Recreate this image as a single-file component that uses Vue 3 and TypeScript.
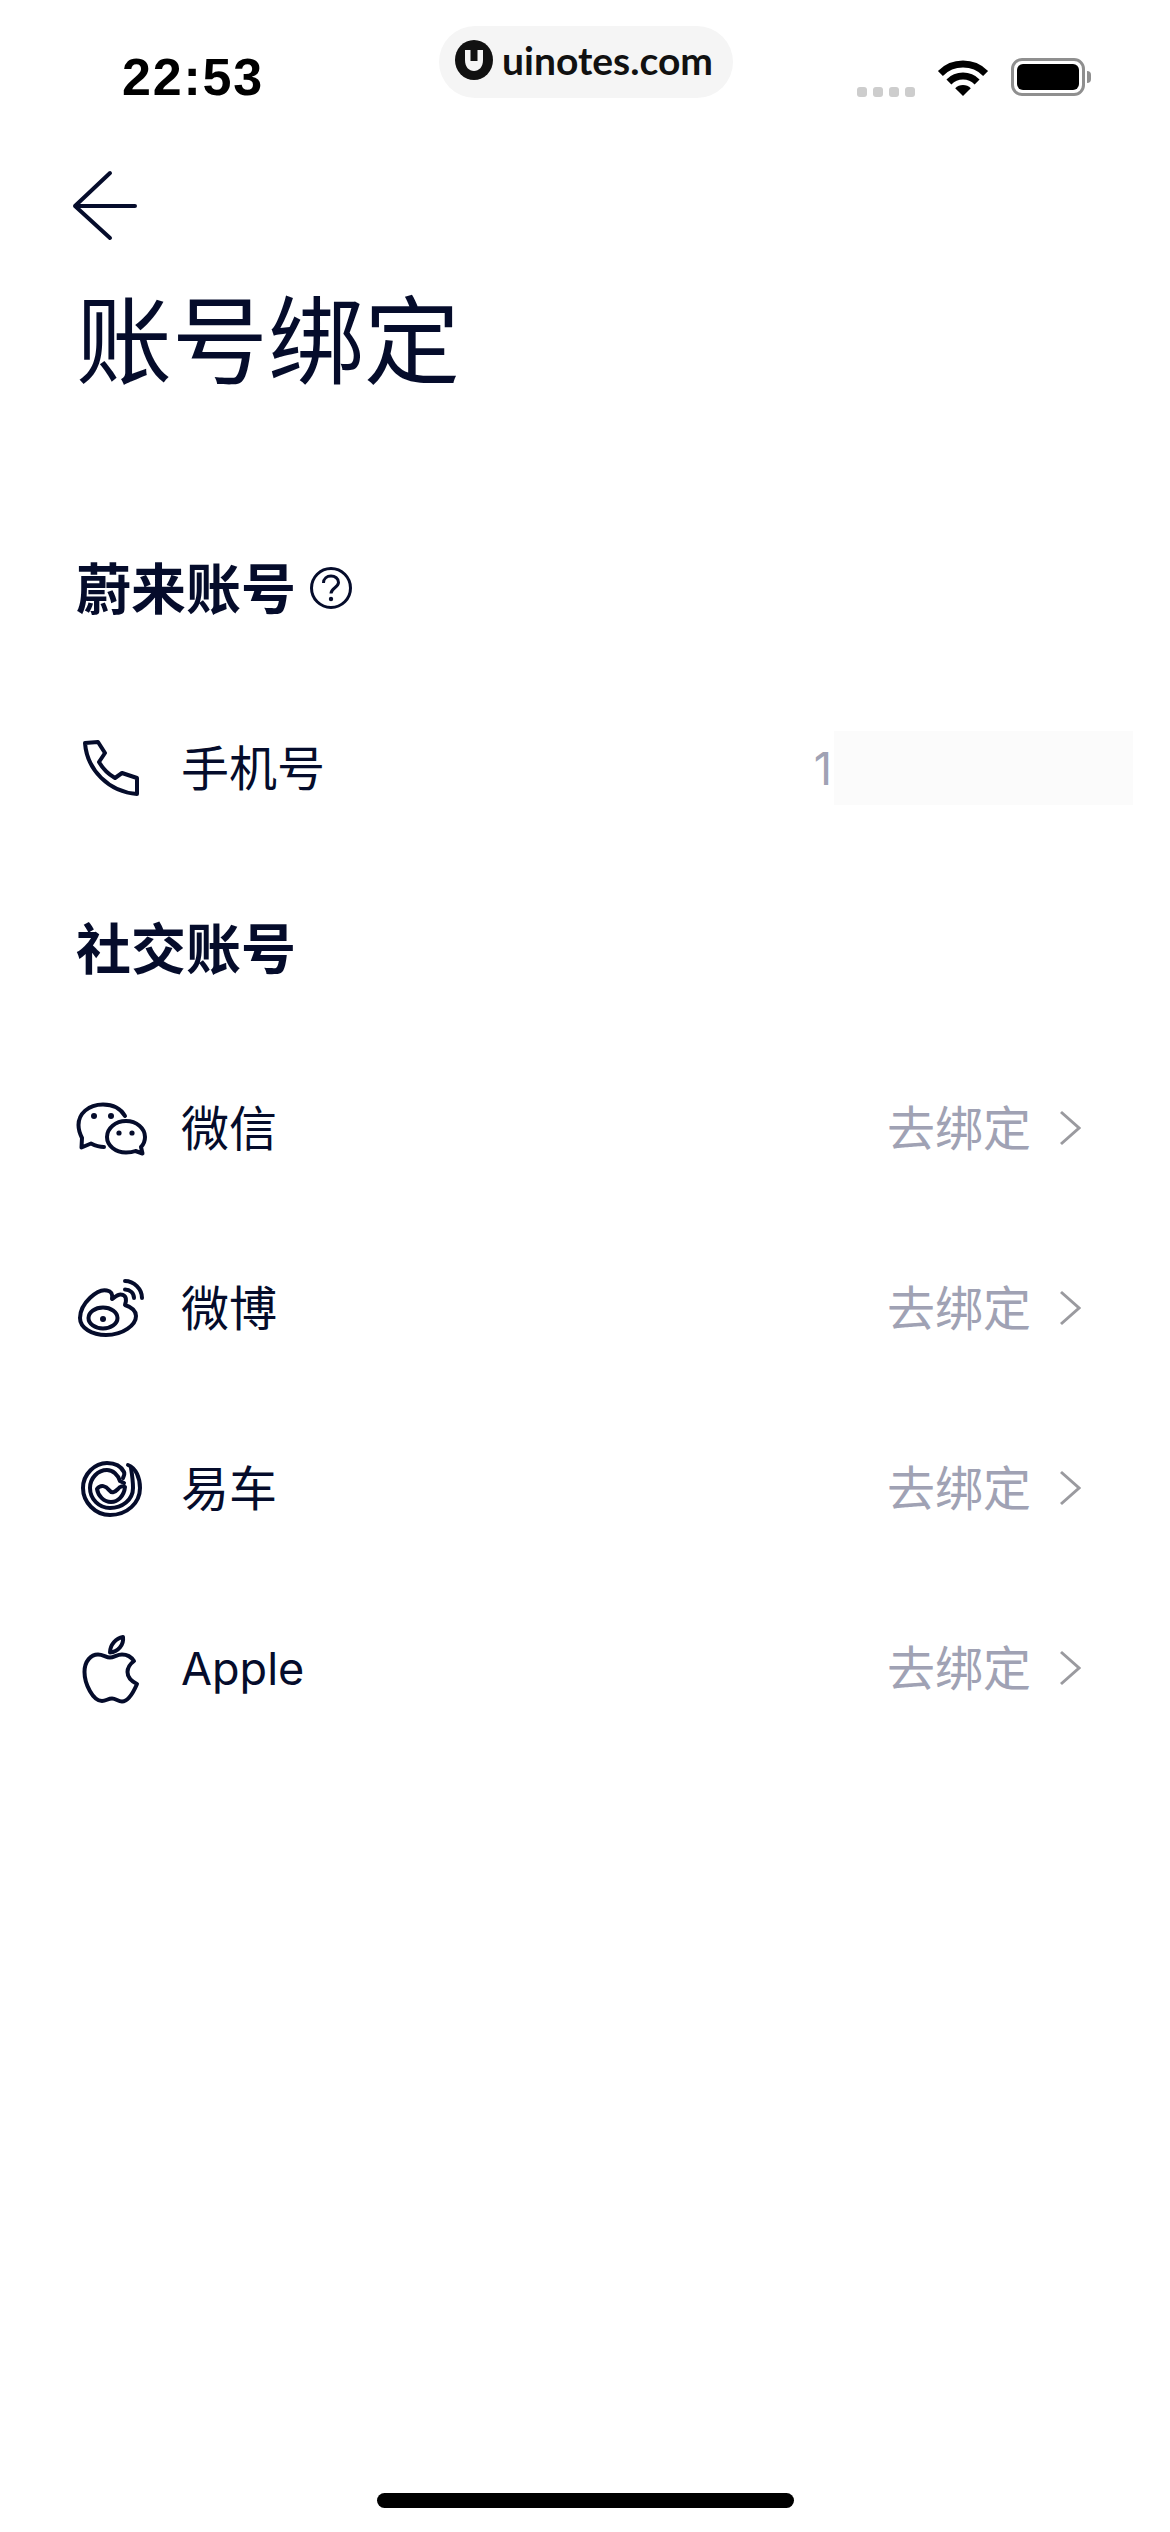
<template>
  <div class="page">
    <div class="status-bar">
      <span class="time">22:53</span>
      <div class="status-icons">
        <div class="signal">
          <i v-for="n in 4" :key="n"></i>
        </div>
        <svg class="wifi" width="52" height="38" viewBox="0 0 50 38">
          <path d="M2.4 15.4A32 32 0 0 1 47.6 15.4" fill="none" stroke="#000" stroke-width="7" />
          <path d="M10.9 23.9A20 20 0 0 1 39.1 23.9" fill="none" stroke="#000" stroke-width="7" />
          <path d="M25 38L17.2 30.2A11 11 0 0 1 32.8 30.2Z" fill="#000" />
        </svg>
        <div class="battery"><div class="battery-fill"></div></div>
        <div class="battery-cap"></div>
      </div>
    </div>

    <div class="watermark">
      <svg width="38" height="40" viewBox="0 0 38 40">
        <ellipse cx="19" cy="20" rx="19" ry="20" fill="#111" />
        <path d="M10 10H15.5V21H22.5V10H28V20C28 27 24 31 19 31C14 31 10 27 10 20Z" fill="#f5f5f5" />
      </svg>
      <span>uinotes.com</span>
    </div>

    <div class="nav">
      <svg width="66" height="72" viewBox="0 0 66 72">
        <path d="M38 3L3 36L38 68M3 36H63" fill="none" stroke="#050c2b" stroke-width="4" stroke-linecap="round" stroke-linejoin="round" />
      </svg>
    </div>

    <h1 class="title">账号绑定</h1>

    <div class="list">
      <div class="section-head">
        <span>蔚来账号</span>
        <svg width="42" height="42" viewBox="0 0 42 42">
          <circle cx="21" cy="21" r="19.5" fill="none" stroke="#050c2b" stroke-width="3" />
          <path d="M13.5 16C13.5 11.5 17 9 21 9C25 9 28.5 11.5 28.5 15.5C28.5 20.5 21 21 21 26.5" fill="none" stroke="#050c2b" stroke-width="3" />
          <circle cx="21" cy="32" r="2.2" fill="#050c2b" />
        </svg>
      </div>

      <div class="row row-phone">
        <div class="row-icon">
          <svg width="80" height="80" viewBox="0 0 80 80">
            <path d="M14 15L27 14L34 25L28 34C32 41 37 46 44 50L51 45L66 50V66C38 64 16 42 14 15Z" class="line" />
          </svg>
        </div>
        <span class="row-label">手机号</span>
        <span class="phone-value">1</span>
        <div class="masked"></div>
      </div>

      <div class="section-head">
        <span>社交账号</span>
      </div>

      <div v-for="item in socials" :key="item.key" class="row">
        <div class="row-icon">
          <svg width="80" height="80" viewBox="0 0 80 80">
            <template v-if="item.key === 'wechat'">
              <path d="M54 28C50 21 42 16.5 32 16.5C17 16.5 7.5 26 7.5 37C7.5 43 10 48 11 50L10.5 59.5L20 55.5C24 57.5 28 59 33 59" class="line" />
              <path d="M36 49A19 16 0 0 1 74 49C74 53 72.5 56.5 70 59L71.5 65.5L64.5 63C62 64 59 64.5 55 64.5C44.5 64.5 36 57.5 36 49Z" class="line" />
              <circle cx="23" cy="28" r="3" class="dot" />
              <circle cx="40" cy="28" r="3" class="dot" />
              <circle cx="48" cy="45" r="2.6" class="dot" />
              <circle cx="61" cy="45" r="2.6" class="dot" />
            </template>
            <template v-else-if="item.key === 'weibo'">
              <path d="M36 22.5C27 20 9 35 9 50C9 60 21 67 35 67C52 67 65 57 65 48C65 42 60 39 54 37C56 31 55 27 50 26.5C47 26 44 29 41 31C42 26 40 23 36 22.5Z" class="line" />
              <ellipse cx="32" cy="50" rx="14.5" ry="10.5" class="line" />
              <circle cx="32" cy="51" r="3" class="dot" />
              <path d="M54 13C63 13 71 21 71 30" class="line" />
              <path d="M54 21.5C59 21.5 63 25 63 30" class="line" />
            </template>
            <template v-else-if="item.key === 'yiche'">
              <path d="M57 17C65 20 69 30 69 40C69 55 56 67 39 67C24 67 12 54 12 40C12 26 24 15 36 15C44 15 50 18 53 24C54 26 53 28 52 30" class="line" />
              <path d="M60 20C61 26 62 33 62 40C62 52 51 60 39 60C28 60 19 51 19 40C19 30 27 22 36 22C42 22 47 27 49 33L53 35" class="line" />
              <path d="M26 41C30 36 35 38 38 42C41 46 44 44 47 41C49 38 52 38 54 39C53 48 47 54 40 54C33 54 27 48 26 41Z" class="line" />
            </template>
            <template v-else>
              <path d="M39 24.5C39 17 45 10 52 9C53 17 47 24 39 24.5Z" class="line" />
              <path d="M39 29.5C35 29.5 32 26.5 27 26.5C20 26.5 13.5 33 13.5 44C13.5 56 22 73 31 73C35 73 37 70.5 41 70.5C45 70.5 47 73.5 51 73.5C58 73.5 63 63 66 56C60 53 56.5 49 56.5 44C56.5 39 59 36 63 33C60 28.5 55.5 26.5 51 26.5C46 26.5 43 29.5 39 29.5Z" class="line" />
            </template>
          </svg>
        </div>
        <span class="row-label" :class="{ latin: item.key === 'apple' }">{{ item.label }}</span>
        <span class="row-action">去绑定</span>
        <svg class="chevron" width="22" height="36" viewBox="0 0 22 36">
          <path d="M2 2L20 18L2 34" fill="none" stroke="#9a9a9f" stroke-width="3" />
        </svg>
      </div>
    </div>

    <div class="home-bar"></div>
  </div>
</template>

<script setup lang="ts">
interface SocialItem {
  key: string;
  label: string;
}

const socials: SocialItem[] = [
  { key: 'wechat', label: '微信' },
  { key: 'weibo', label: '微博' },
  { key: 'yiche', label: '易车' },
  { key: 'apple', label: 'Apple' },
];
</script>

<style>
html,
body {
  margin: 0;
  background: #fff;
}
</style>

<style scoped>
.page {
  position: relative;
  width: 1170px;
  height: 2532px;
  display: flex;
  flex-direction: column;
  background: #fff;
  color: #050c2b;
  font-family: 'Noto Sans', 'Noto Sans CJK SC', sans-serif;
  overflow: hidden;
}

.status-bar {
  height: 130px;
  box-sizing: border-box;
  padding: 58px 79px 0 122px;
  display: flex;
  justify-content: space-between;
}

.time {
  font-family: 'Liberation Sans', sans-serif;
  font-weight: 700;
  font-size: 52px;
  line-height: 38px;
  letter-spacing: 1.8px;
  color: #000;
}

.status-icons {
  display: flex;
  align-items: flex-start;
}

.signal {
  display: flex;
  gap: 6px;
  margin-top: 29px;
  margin-right: 22px;
}

.signal i {
  width: 10px;
  height: 10px;
  border-radius: 3px;
  background: #cdcdcd;
}

.battery {
  width: 74px;
  height: 38px;
  margin-left: 22px;
  box-sizing: border-box;
  border: 3px solid #8f8f8f;
  border-radius: 11px;
  padding: 3px;
}

.battery-fill {
  width: 100%;
  height: 100%;
  background: #000;
  border-radius: 6px;
}

.battery-cap {
  width: 4px;
  height: 12px;
  margin-top: 13px;
  margin-left: 2px;
  background: #8f8f8f;
  border-radius: 0 4px 4px 0;
}

.watermark {
  position: absolute;
  left: 439px;
  top: 26px;
  width: 294px;
  height: 72px;
  box-sizing: border-box;
  padding: 0 0 4px 16px;
  display: flex;
  align-items: center;
  gap: 9px;
  background: #f5f5f5;
  border-radius: 36px;
  color: #111;
  font-family: Lato, sans-serif;
  font-weight: 700;
  font-size: 39px;
}

.nav {
  height: 152px;
  padding-left: 72px;
  display: flex;
  align-items: center;
}

.title {
  margin: 9px 0 111px 76px;
  font-size: 96px;
  line-height: 96px;
  font-weight: 400;
}

.list {
  display: flex;
  flex-direction: column;
}

.section-head {
  height: 180px;
  padding-left: 76px;
  display: flex;
  align-items: center;
  gap: 14px;
  font-size: 55px;
  font-weight: 700;
}

.section-head span {
  padding-bottom: 6px;
}

.row {
  height: 180px;
  padding: 0 89px 0 71px;
  display: flex;
  align-items: center;
}

.row-phone {
  padding-right: 37px;
}

.row-icon {
  width: 80px;
  height: 80px;
  margin-right: 30px;
}

.row-icon svg {
  display: block;
}

.line {
  fill: none;
  stroke: #050c2b;
  stroke-width: 4;
  stroke-linejoin: round;
  stroke-linecap: round;
}

.dot {
  fill: #050c2b;
}

.row-label {
  padding-bottom: 6px;
  font-size: 48px;
  font-weight: 400;
}

.row-label.latin {
  padding-bottom: 0;
  font-family: Inter, sans-serif;
  font-size: 45px;
}

.row-action {
  margin-left: auto;
  margin-right: 28px;
  padding-bottom: 6px;
  font-size: 48px;
  color: #a0a2b4;
}

.phone-value {
  margin-left: auto;
  font-family: Inter, sans-serif;
  font-size: 45px;
  color: #a0a2b4;
}

.masked {
  width: 299px;
  height: 74px;
  margin-left: 2px;
  background: #fbfbfb;
}

.home-bar {
  position: absolute;
  left: 377px;
  bottom: 24px;
  width: 417px;
  height: 15px;
  background: #000;
  border-radius: 8px;
}
</style>
